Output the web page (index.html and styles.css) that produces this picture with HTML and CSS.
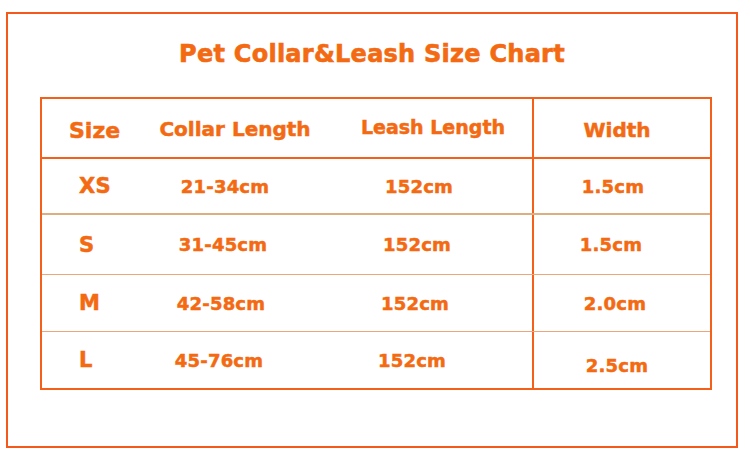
FILE: index.html
```html
<!DOCTYPE html>
<html lang="en">
<head>
<meta charset="utf-8">
<title>Pet Collar&amp;Leash Size Chart</title>
<link rel="stylesheet" href="styles.css">
</head>
<body>
<div class="frame">
  <h1 class="title">Pet Collar&amp;Leash Size Chart</h1>
  <div class="chart">
    <div class="row row-head">
      <div class="cell c1 h1c">Size</div>
      <div class="cell c2 h2c">Collar Length</div>
      <div class="cell c3 h3c">Leash Length</div>
      <div class="cell c4 h4c">Width</div>
    </div>
    <div class="row row-xs">
      <div class="cell c1">XS</div>
      <div class="cell c2">21-34cm</div>
      <div class="cell c3">152cm</div>
      <div class="cell c4">1.5cm</div>
    </div>
    <div class="row row-s">
      <div class="cell c1">S</div>
      <div class="cell c2">31-45cm</div>
      <div class="cell c3">152cm</div>
      <div class="cell c4">1.5cm</div>
    </div>
    <div class="row row-m">
      <div class="cell c1">M</div>
      <div class="cell c2">42-58cm</div>
      <div class="cell c3">152cm</div>
      <div class="cell c4">2.0cm</div>
    </div>
    <div class="row row-l">
      <div class="cell c1">L</div>
      <div class="cell c2">45-76cm</div>
      <div class="cell c3">152cm</div>
      <div class="cell c4">2.5cm</div>
    </div>
  </div>
</div>
</body>
</html>
```
FILE: styles.css
```css
html, body {
  margin: 0;
  padding: 0;
  background: #ffffff;
}
body {
  font-family: "DejaVu Sans", "Liberation Sans", sans-serif;
  color: #f36a12;
}
.frame {
  box-sizing: border-box;
  width: 732px;
  height: 436px;
  margin: 12px 0 0 6px;
  border: 2px solid #f4581a;
  padding: 0 0 0 32px;
}
.title {
  margin: 0;
  height: 83px;
  box-sizing: border-box;
  padding: 26px 32px 0 0;
  text-align: center;
  font-size: 24px;
  line-height: 28px;
  font-weight: 700;
  letter-spacing: 0.25px;
  -webkit-text-stroke: 0.6px #f36a12;
}
.chart {
  box-sizing: border-box;
  width: 672px;
  border: 2px solid #f4601a;
}
.row {
  display: grid;
  grid-template-columns: 106px 164px 220px 178px;
  box-sizing: border-box;
  border-bottom: 1px solid #efa57a;
}
.row-head { height: 60px; border-bottom: 2px solid #f4601a; }
.row-xs { height: 56px; border-bottom: 2px solid #dcae84; }
.row-s { height: 60px; }
.row-m { height: 57px; }
.row-l { height: 56px; border-bottom: 0; }
.cell {
  display: flex;
  align-items: center;
  justify-content: center;
  font-size: 18px;
  font-weight: 700;
  white-space: nowrap;
  letter-spacing: 0.2px;
  -webkit-text-stroke: 0.5px #f36a12;
}
.c1 { justify-content: flex-start; padding-left: 37px; font-size: 21px; }
.c2 { padding-right: 10px; }
.c3 { padding-right: 6px; }
.c4 { border-left: 2px solid #f4601a; padding-right: 18px; }
.row-head .cell { letter-spacing: 0; }
.h1c { padding-left: 27px; font-size: 22px; padding-top: 4px; }
.h2c { padding-right: 0; padding-left: 10px; padding-top: 2px; font-size: 20px; }
.h3c { padding-right: 0; padding-left: 22px; padding-bottom: 3px; font-size: 19px; }
.h4c { padding-right: 10px; padding-top: 4px; font-size: 20px; }
.row-s .c2 { padding-right: 14px; }
.row-m .c2 { padding-right: 18px; }
.row-l .c2 { padding-right: 22px; }
.row-s .c3 { padding-right: 10px; }
.row-m .c3 { padding-right: 14px; }
.row-l .c3 { padding-right: 20px; }
.row-s .c4 { padding-right: 22px; }
.row-m .c4 { padding-right: 14px; }
.row-l .c4 { padding-right: 10px; padding-top: 10px; }
```
